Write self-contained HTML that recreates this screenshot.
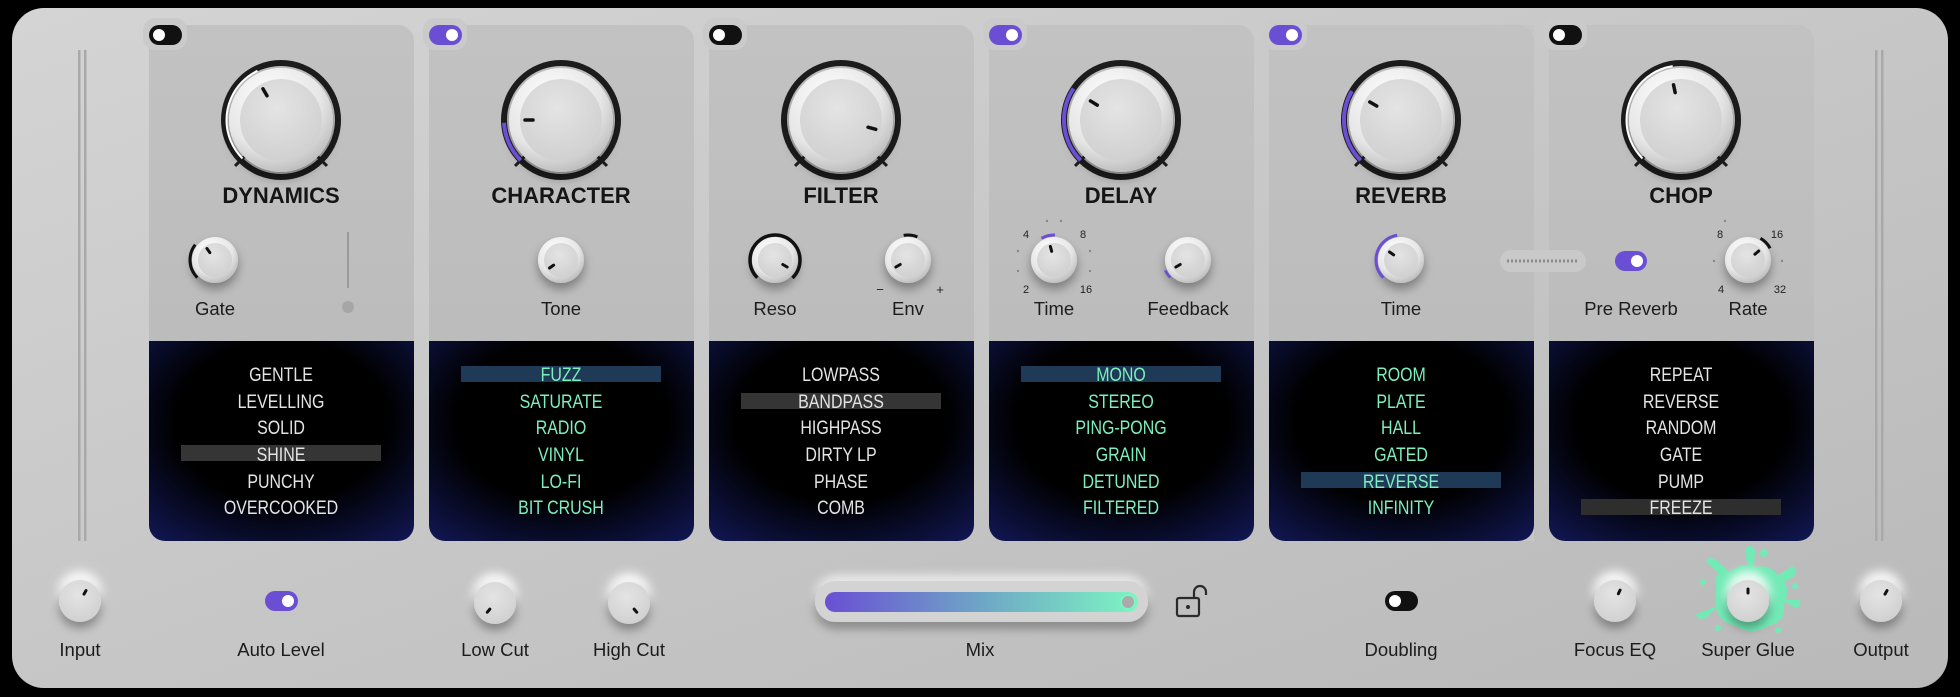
<!DOCTYPE html>
<html><head><meta charset="utf-8"><style>
html,body{margin:0;padding:0;background:#000;}
svg{display:block}
.t{font-family:"Liberation Sans",sans-serif;font-weight:bold;font-size:22px;fill:#151515;text-anchor:middle}
.l{font-family:"Liberation Sans",sans-serif;font-size:18.5px;fill:#1c1c1c;text-anchor:middle}
.s{font-family:"Liberation Sans Narrow","Liberation Sans",sans-serif;font-size:19px;text-anchor:middle}
.w{fill:#e4e4e4}.g{fill:#7df0bd}
.n{font-family:"Liberation Sans",sans-serif;font-size:11px;fill:#222;text-anchor:middle}
</style></head><body>
<svg width="1960" height="697" viewBox="0 0 1960 697" xmlns="http://www.w3.org/2000/svg">
<defs>
<linearGradient id="pg" x1="0" y1="0" x2="1" y2="1"><stop offset="0" stop-color="#d4d4d4"/><stop offset="1" stop-color="#b9b9b9"/></linearGradient>
<linearGradient id="mg" x1="0" y1="0" x2="0" y2="1"><stop offset="0" stop-color="#c2c2c2"/><stop offset="1" stop-color="#b8b8b8"/></linearGradient>
<radialGradient id="dg" cx="0.5" cy="0.4" r="0.8"><stop offset="0.5" stop-color="#000"/><stop offset="1" stop-color="#12195a"/></radialGradient>
<radialGradient id="kb" cx="0.4" cy="0.3" r="0.8"><stop offset="0" stop-color="#ffffff"/><stop offset="0.6" stop-color="#e6e6e6"/><stop offset="1" stop-color="#b0b0b0"/></radialGradient>
<radialGradient id="kf" cx="0.45" cy="0.35" r="0.7"><stop offset="0" stop-color="#e4e4e4"/><stop offset="1" stop-color="#cfcfcf"/></radialGradient>
<linearGradient id="mix" x1="0" x2="1"><stop offset="0" stop-color="#6a4fd4"/><stop offset="0.5" stop-color="#6ea6c6"/><stop offset="1" stop-color="#7df5c2"/></linearGradient>
<filter id="sh" x="-50%" y="-50%" width="200%" height="200%"><feDropShadow dx="0" dy="6" stdDeviation="5" flood-color="#000" flood-opacity="0.35"/></filter>
<filter id="bl" x="-50%" y="-50%" width="200%" height="200%"><feGaussianBlur stdDeviation="5"/></filter>
<g id="big">
 <circle r="57" fill="none" stroke="#1c1c1c" stroke-width="6"/>
 <line x1="0" y1="-51" x2="0" y2="-65" stroke="#1c1c1c" stroke-width="3" transform="rotate(-135)"/>
 <line x1="0" y1="-51" x2="0" y2="-65" stroke="#1c1c1c" stroke-width="3" transform="rotate(135)"/>
 <circle r="52" fill="url(#kb)" filter="url(#sh)"/>
 <circle r="41" fill="url(#kf)"/>
</g>
<g id="sm">
 <circle r="23" fill="url(#kb)" filter="url(#sh)"/>
 <circle r="17" fill="url(#kf)"/>
</g>
<g id="bk">
 <circle r="22" cy="-8" fill="#fff" opacity="0.9" filter="url(#bl)"/>
 <circle r="21" fill="url(#kf)" filter="url(#sh)"/>
</g>
</defs>
<rect width="1960" height="697" fill="#000"/>
<rect x="12" y="8" width="1936" height="680" rx="32" fill="url(#pg)"/>
<rect x="78" y="50" width="2.5" height="491" fill="#a9a9a9"/><rect x="84" y="50" width="2.5" height="491" fill="#a9a9a9"/>
<rect x="1875" y="50" width="2.5" height="491" fill="#a9a9a9"/><rect x="1881" y="50" width="2.5" height="491" fill="#a9a9a9"/>
<rect x="1520" y="25" width="14" height="516" fill="#c6c6c6"/>

<g>
<rect x="149" y="25" width="265" height="516" rx="16" fill="url(#mg)"/>
<rect x="429" y="25" width="265" height="516" rx="16" fill="url(#mg)"/>
<rect x="709" y="25" width="265" height="516" rx="16" fill="url(#mg)"/>
<rect x="989" y="25" width="265" height="516" rx="16" fill="url(#mg)"/>
<rect x="1269" y="25" width="265" height="516" rx="16" fill="url(#mg)"/>
<rect x="1549" y="25" width="265" height="516" rx="16" fill="url(#mg)"/>
</g>
<rect x="1500" y="250" width="86" height="22" rx="11" fill="#c9c9c9"/>
<line x1="1507" y1="261" x2="1578" y2="261" stroke="#8a8a8a" stroke-width="3" stroke-dasharray="2 2"/>
<g fill="#cacaca">
<rect x="143" y="18" width="44" height="32" rx="12"/><rect x="423" y="18" width="44" height="32" rx="12"/>
<rect x="703" y="18" width="44" height="32" rx="12"/><rect x="983" y="18" width="44" height="32" rx="12"/>
<rect x="1263" y="18" width="44" height="32" rx="12"/><rect x="1543" y="18" width="44" height="32" rx="12"/>
</g>
<g>
<rect x="149" y="25" width="33" height="20" rx="10" fill="#111"/><circle cx="159" cy="35" r="6" fill="#fff"/>
<rect x="429" y="25" width="33" height="20" rx="10" fill="#6a4fd4"/><circle cx="452" cy="35" r="6" fill="#fff"/>
<rect x="709" y="25" width="33" height="20" rx="10" fill="#111"/><circle cx="719" cy="35" r="6" fill="#fff"/>
<rect x="989" y="25" width="33" height="20" rx="10" fill="#6a4fd4"/><circle cx="1012" cy="35" r="6" fill="#fff"/>
<rect x="1269" y="25" width="33" height="20" rx="10" fill="#6a4fd4"/><circle cx="1292" cy="35" r="6" fill="#fff"/>
<rect x="1549" y="25" width="33" height="20" rx="10" fill="#111"/><circle cx="1559" cy="35" r="6" fill="#fff"/>
</g>

<g transform="translate(281,120)"><use href="#big"/><circle r="54.5" fill="none" stroke="#fff" stroke-width="2" stroke-dasharray="104 1000" transform="rotate(135)"/><circle r="52" fill="url(#kb)"/><circle r="41" fill="url(#kf)"/><line x1="0" y1="-36" x2="0" y2="-28" stroke="#111" stroke-width="3.5" stroke-linecap="round" transform="rotate(-30)"/></g>
<g transform="translate(561,120)"><use href="#big"/><circle r="57" fill="none" stroke="#6a4fd4" stroke-width="4" stroke-dasharray="42 1000" transform="rotate(135)"/><line x1="0" y1="-36" x2="0" y2="-28" stroke="#111" stroke-width="3.5" stroke-linecap="round" transform="rotate(-90)"/></g>
<g transform="translate(841,120)"><use href="#big"/><line x1="0" y1="-36" x2="0" y2="-28" stroke="#111" stroke-width="3.5" stroke-linecap="round" transform="rotate(105)"/></g>
<g transform="translate(1121,120)"><use href="#big"/><circle r="57" fill="none" stroke="#6a4fd4" stroke-width="4" stroke-dasharray="78 1000" transform="rotate(135)"/><line x1="0" y1="-36" x2="0" y2="-28" stroke="#111" stroke-width="3.5" stroke-linecap="round" transform="rotate(-58)"/></g>
<g transform="translate(1401,120)"><use href="#big"/><circle r="57" fill="none" stroke="#6a4fd4" stroke-width="4" stroke-dasharray="75 1000" transform="rotate(135)"/><line x1="0" y1="-36" x2="0" y2="-28" stroke="#111" stroke-width="3.5" stroke-linecap="round" transform="rotate(-60)"/></g>
<g transform="translate(1681,120)"><use href="#big"/><circle r="54.5" fill="none" stroke="#fff" stroke-width="2" stroke-dasharray="120 1000" transform="rotate(135)"/><circle r="52" fill="url(#kb)"/><circle r="41" fill="url(#kf)"/><line x1="0" y1="-36" x2="0" y2="-28" stroke="#111" stroke-width="3.5" stroke-linecap="round" transform="rotate(-12)"/></g>

<text class="t" x="281" y="203">DYNAMICS</text>
<text class="t" x="561" y="203">CHARACTER</text>
<text class="t" x="841" y="203">FILTER</text>
<text class="t" x="1121" y="203">DELAY</text>
<text class="t" x="1401" y="203">REVERB</text>
<text class="t" x="1681" y="203">CHOP</text>

<g transform="translate(215,260)"><use href="#sm"/><circle r="25" fill="none" stroke="#111" stroke-width="3" stroke-dasharray="36 1000" transform="rotate(135)"/><line x1="0" y1="-14" x2="0" y2="-9" stroke="#111" stroke-width="3" stroke-linecap="round" transform="rotate(-35)"/></g>
<rect x="347" y="232" width="2" height="56" fill="#9a9a9a"/><circle cx="348" cy="307" r="6" fill="#a6a6a6"/>
<g transform="translate(561,260)"><use href="#sm"/><line x1="0" y1="-14" x2="0" y2="-9" stroke="#111" stroke-width="3" stroke-linecap="round" transform="rotate(-125)"/></g>
<g transform="translate(775,260)"><use href="#sm"/><circle r="25" fill="none" stroke="#111" stroke-width="3.5" stroke-dasharray="118 1000" transform="rotate(135)"/><line x1="0" y1="-14" x2="0" y2="-9" stroke="#111" stroke-width="3" stroke-linecap="round" transform="rotate(120)"/></g>
<g transform="translate(908,260)"><use href="#sm"/><circle r="25" fill="none" stroke="#111" stroke-width="3" stroke-dasharray="14 1000" transform="rotate(-100)"/><line x1="0" y1="-14" x2="0" y2="-9" stroke="#111" stroke-width="3" stroke-linecap="round" transform="rotate(-120)"/></g>
<text class="n" x="880" y="294" style="font-size:13px">−</text><text class="n" x="940" y="294" style="font-size:13px">+</text>
<g transform="translate(1054,260)"><use href="#sm"/><circle r="25" fill="none" stroke="#6a4fd4" stroke-width="3" stroke-dasharray="14 1000" transform="rotate(-120)"/><line x1="0" y1="-14" x2="0" y2="-9" stroke="#111" stroke-width="3" stroke-linecap="round" transform="rotate(-15)"/></g>
<g fill="#888"><circle cx="1047" cy="221" r="1.2"/><circle cx="1061" cy="221" r="1.2"/><circle cx="1018" cy="251" r="1.2"/><circle cx="1090" cy="251" r="1.2"/><circle cx="1018" cy="271" r="1.2"/><circle cx="1090" cy="271" r="1.2"/><circle cx="1725" cy="221" r="1.2"/><circle cx="1714" cy="261" r="1.2"/><circle cx="1782" cy="261" r="1.2"/></g>
<text class="n" x="1026" y="238">4</text><text class="n" x="1083" y="238">8</text><text class="n" x="1026" y="293">2</text><text class="n" x="1086" y="293">16</text>
<g transform="translate(1188,260)"><use href="#sm"/><circle r="25" fill="none" stroke="#6a4fd4" stroke-width="2.5" stroke-dasharray="9 1000" transform="rotate(135)"/><line x1="0" y1="-14" x2="0" y2="-9" stroke="#111" stroke-width="3" stroke-linecap="round" transform="rotate(-120)"/></g>
<g transform="translate(1401,260)"><use href="#sm"/><circle r="25" fill="none" stroke="#6a4fd4" stroke-width="3" stroke-dasharray="55 1000" transform="rotate(135)"/><line x1="0" y1="-14" x2="0" y2="-9" stroke="#111" stroke-width="3" stroke-linecap="round" transform="rotate(-55)"/></g>
<rect x="1615" y="251" width="32" height="20" rx="10" fill="#6a4fd4"/><circle cx="1637" cy="261" r="6" fill="#fff"/>
<g transform="translate(1748,260)"><use href="#sm"/><circle r="25" fill="none" stroke="#111" stroke-width="3" stroke-dasharray="14 1000" transform="rotate(-60)"/><line x1="0" y1="-14" x2="0" y2="-9" stroke="#111" stroke-width="3" stroke-linecap="round" transform="rotate(50)"/></g>
<text class="n" x="1720" y="238">8</text><text class="n" x="1777" y="238">16</text><text class="n" x="1721" y="293">4</text><text class="n" x="1780" y="293">32</text>

<text class="l" x="215" y="315">Gate</text>
<text class="l" x="561" y="315">Tone</text>
<text class="l" x="775" y="315">Reso</text>
<text class="l" x="908" y="315">Env</text>
<text class="l" x="1054" y="315">Time</text>
<text class="l" x="1188" y="315">Feedback</text>
<text class="l" x="1401" y="315">Time</text>
<text class="l" x="1631" y="315">Pre Reverb</text>
<text class="l" x="1748" y="315">Rate</text>

<g>
<path d="M149 341 H414 V525 a16 16 0 0 1 -16 16 H165 a16 16 0 0 1 -16 -16 Z" fill="url(#dg)"/>
<path d="M429 341 H694 V525 a16 16 0 0 1 -16 16 H445 a16 16 0 0 1 -16 -16 Z" fill="url(#dg)"/>
<path d="M709 341 H974 V525 a16 16 0 0 1 -16 16 H725 a16 16 0 0 1 -16 -16 Z" fill="url(#dg)"/>
<path d="M989 341 H1254 V525 a16 16 0 0 1 -16 16 H1005 a16 16 0 0 1 -16 -16 Z" fill="url(#dg)"/>
<path d="M1269 341 H1534 V525 a16 16 0 0 1 -16 16 H1285 a16 16 0 0 1 -16 -16 Z" fill="url(#dg)"/>
<path d="M1549 341 H1814 V525 a16 16 0 0 1 -16 16 H1565 a16 16 0 0 1 -16 -16 Z" fill="url(#dg)"/>
</g>
<rect x="181" y="445" width="200" height="16" fill="#353535"/>
<rect x="461" y="366" width="200" height="16" fill="#1f3a56"/>
<rect x="741" y="393" width="200" height="16" fill="#353535"/>
<rect x="1021" y="366" width="200" height="16" fill="#1f3a56"/>
<rect x="1301" y="472" width="200" height="16" fill="#1f3a56"/>
<rect x="1581" y="499" width="200" height="16" fill="#2e2e2e"/>

<g class="s w" transform="translate(281,0) scale(0.84,1)">
<text x="0" y="381">GENTLE</text><text x="0" y="408">LEVELLING</text><text x="0" y="434">SOLID</text><text x="0" y="461">SHINE</text><text x="0" y="488">PUNCHY</text><text x="0" y="514">OVERCOOKED</text></g>
<g class="s w" transform="translate(841,0) scale(0.84,1)">
<text x="0" y="381">LOWPASS</text><text x="0" y="408">BANDPASS</text><text x="0" y="434">HIGHPASS</text><text x="0" y="461">DIRTY LP</text><text x="0" y="488">PHASE</text><text x="0" y="514">COMB</text></g>
<g class="s w" transform="translate(1681,0) scale(0.84,1)">
<text x="0" y="381">REPEAT</text><text x="0" y="408">REVERSE</text><text x="0" y="434">RANDOM</text><text x="0" y="461">GATE</text><text x="0" y="488">PUMP</text><text x="0" y="514">FREEZE</text></g>
<g class="s g" transform="translate(561,0) scale(0.84,1)">
<text x="0" y="381">FUZZ</text><text x="0" y="408">SATURATE</text><text x="0" y="434">RADIO</text><text x="0" y="461">VINYL</text><text x="0" y="488">LO-FI</text><text x="0" y="514">BIT CRUSH</text></g>
<g class="s g" transform="translate(1121,0) scale(0.84,1)">
<text x="0" y="381">MONO</text><text x="0" y="408">STEREO</text><text x="0" y="434">PING-PONG</text><text x="0" y="461">GRAIN</text><text x="0" y="488">DETUNED</text><text x="0" y="514">FILTERED</text></g>
<g class="s g" transform="translate(1401,0) scale(0.84,1)">
<text x="0" y="381">ROOM</text><text x="0" y="408">PLATE</text><text x="0" y="434">HALL</text><text x="0" y="461">GATED</text><text x="0" y="488">REVERSE</text><text x="0" y="514">INFINITY</text></g>

<g transform="translate(80,601)"><use href="#bk"/><line x1="0" y1="-12" x2="0" y2="-8" stroke="#111" stroke-width="3" stroke-linecap="round" transform="rotate(30)"/></g>
<rect x="265" y="591" width="33" height="20" rx="10" fill="#6a4fd4"/><circle cx="288" cy="601" r="6" fill="#fff"/>
<g transform="translate(495,603)"><use href="#bk"/><line x1="0" y1="-12" x2="0" y2="-8" stroke="#111" stroke-width="3" stroke-linecap="round" transform="rotate(-140)"/></g>
<g transform="translate(629,603)"><use href="#bk"/><line x1="0" y1="-12" x2="0" y2="-8" stroke="#111" stroke-width="3" stroke-linecap="round" transform="rotate(140)"/></g>
<rect x="815" y="576" width="333" height="44" rx="22" fill="#fff" opacity="0.8" filter="url(#bl)"/>
<rect x="815" y="581" width="333" height="41" rx="20.5" fill="#d3d3d3" filter="url(#sh)"/>
<rect x="825" y="592" width="313" height="20" rx="10" fill="url(#mix)"/>
<circle cx="1128" cy="602" r="7" fill="#aaa" stroke="#7df5c2" stroke-width="2"/>
<g fill="none" stroke="#2a2a2a" stroke-width="2.2"><rect x="1177" y="598" width="22" height="18" rx="2"/><path d="M1194 598 v-6 a6 6 0 0 1 12 0 v3"/></g><circle cx="1188" cy="607" r="2" fill="#2a2a2a"/>
<rect x="1385" y="591" width="33" height="20" rx="10" fill="#111"/><circle cx="1395" cy="601" r="6" fill="#fff"/>
<g transform="translate(1615,601)"><use href="#bk"/><line x1="0" y1="-12" x2="0" y2="-8" stroke="#111" stroke-width="3" stroke-linecap="round" transform="rotate(25)"/></g>
<g fill="#72eab6">
<path d="M1716 586 Q1712 570 1730 572 Q1740 562 1752 568 Q1770 562 1780 578 Q1792 586 1784 604 Q1786 622 1768 626 Q1752 636 1736 626 Q1716 622 1716 604 Z"/>
<path d="M1748 570 L1745 550 Q1750 542 1755 550 L1754 570 Z"/>
<path d="M1724 578 L1706 562 Q1708 555 1716 560 L1732 574 Z"/>
<path d="M1774 578 L1792 566 Q1799 570 1793 577 L1780 584 Z"/>
<path d="M1782 600 L1800 600 Q1802 607 1795 608 Z"/>
<path d="M1718 606 L1696 614 Q1697 621 1706 618 Z"/>
<circle cx="1764" cy="553" r="4"/><circle cx="1703" cy="582" r="3"/><circle cx="1795" cy="586" r="3"/><circle cx="1778" cy="630" r="3"/><circle cx="1718" cy="628" r="3"/>
</g>
<g transform="translate(1748,601)"><use href="#bk"/><line x1="0" y1="-12" x2="0" y2="-8" stroke="#111" stroke-width="3" stroke-linecap="round"/></g>
<g transform="translate(1881,601)"><use href="#bk"/><line x1="0" y1="-12" x2="0" y2="-8" stroke="#111" stroke-width="3" stroke-linecap="round" transform="rotate(30)"/></g>

<text class="l" x="80" y="656">Input</text>
<text class="l" x="281" y="656">Auto Level</text>
<text class="l" x="495" y="656">Low Cut</text>
<text class="l" x="629" y="656">High Cut</text>
<text class="l" x="980" y="656">Mix</text>
<text class="l" x="1401" y="656">Doubling</text>
<text class="l" x="1615" y="656">Focus EQ</text>
<text class="l" x="1748" y="656">Super Glue</text>
<text class="l" x="1881" y="656">Output</text>
</svg>
</body></html>
